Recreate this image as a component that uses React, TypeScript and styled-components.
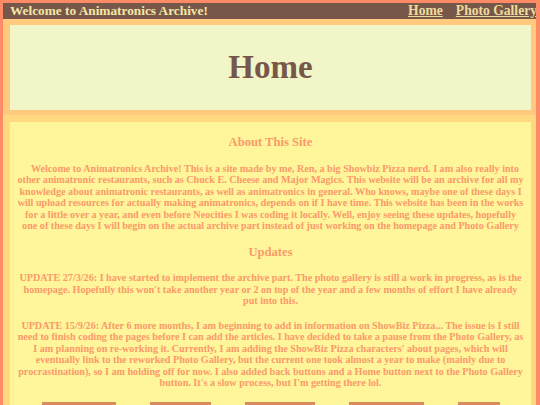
import React from 'react';
import styled, { createGlobalStyle } from 'styled-components';

const colors = {
  coral: '#ff8a66',
  brown: '#77574a',
  cream: '#f4e8a4',
  link: '#efdc9c',
  headerOuter: '#ffc97e',
  headerInner: '#f2f5c7',
  mainOuter: '#ffd87f',
  mainInner: '#fff59b',
  text: '#fb9a6a',
  button: '#d98a5f',
};

const GlobalStyle = createGlobalStyle`
  html, body {
    margin: 0;
    overflow: hidden;
  }
  body {
    background: ${colors.coral};
    font-family: "Liberation Serif", "Times New Roman", serif;
    font-weight: bold;
  }
`;

const buttons = [
  { label: 'Showbiz Pizza', width: 74 },
  { label: 'Chuck E.', width: 61 },
  { label: 'Characters', width: 70 },
  { label: 'Photo Gallery', width: 75 },
  { label: 'Back', width: 42 },
];

const App: React.FC = () => {
  return (
    <>
      <GlobalStyle />
      <Page>
        <TopBar>
          <SiteTitle>Welcome to Animatronics Archive!</SiteTitle>
          <Nav>
            <NavLink href="#">Home</NavLink>
            <NavLink href="#">Photo Gallery</NavLink>
          </Nav>
        </TopBar>
        <Header>
          <HeaderPanel>
            <PageTitle>Home</PageTitle>
          </HeaderPanel>
        </Header>
        <Main>
          <MainPanel>
            <SectionTitle>About This Site</SectionTitle>
            <Paragraph indent>
              Welcome to Animatronics Archive! This is a site made by me, Ren, a
              big Showbiz Pizza nerd. I am also really into other animatronic
              restaurants, such as Chuck E. Cheese and Major Magics. This website
              will be an archive for all my knowledge about animatronic
              restaurants, as well as animatronics in general. Who knows, maybe
              one of these days I will upload resources for actually making
              animatronics, depends on if I have time. This website has been in
              the works for a little over a year, and even before Neocities I was
              coding it locally. Well, enjoy seeing these updates, hopefully one
              of these days I will begin on the actual archive part instead of
              just working on the homepage and Photo Gallery
            </Paragraph>
            <SectionTitle>Updates</SectionTitle>
            <Paragraph>
              UPDATE 27/3/26: I have started to implement the archive part. The
              photo gallery is still a work in progress, as is the homepage.
              Hopefully this won't take another year or 2 on top of the year and
              a few months of effort I have already put into this.
            </Paragraph>
            <Paragraph>
              UPDATE 15/9/26: After 6 more months, I am beginning to add in
              information on ShowBiz Pizza... The issue is I still need to finish
              coding the pages before I can add the articles. I have decided to
              take a pause from the Photo Gallery, as I am planning on re-working
              it. Currently, I am adding the ShowBiz Pizza characters' about
              pages, which will eventually link to the reworked Photo Gallery, but
              the current one took almost a year to make (mainly due to
              procrastination), so I am holding off for now. I also added back
              buttons and a Home button next to the Photo Gallery button. It's a
              slow process, but I'm getting there lol.
            </Paragraph>
            <ButtonRow>
              {buttons.map((b) => (
                <LinkButton key={b.label} w={b.width}>
                  {b.label}
                </LinkButton>
              ))}
            </ButtonRow>
          </MainPanel>
        </Main>
      </Page>
    </>
  );
};

const Page = styled.div`
  padding: 3px 4px 0 3px;
`;

const TopBar = styled.div`
  display: flex;
  justify-content: space-between;
  align-items: center;
  height: 16px;
  padding-left: 7px;
  background: ${colors.brown};
  overflow: hidden;
`;

const SiteTitle = styled.div`
  color: ${colors.cream};
  font-size: 13.3px;
  white-space: nowrap;
`;

const Nav = styled.nav`
  display: flex;
  gap: 13px;
  margin-right: -1px;
  white-space: nowrap;
`;

const NavLink = styled.a`
  color: ${colors.link};
  font-size: 13.6px;
  text-decoration: underline;
`;

const Header = styled.header`
  background: ${colors.headerOuter};
  padding: 6px 5px 5px 7px;
`;

const HeaderPanel = styled.div`
  display: flex;
  align-items: center;
  justify-content: center;
  height: 85px;
  background: ${colors.headerInner};
`;

const PageTitle = styled.h1`
  margin: 0;
  color: ${colors.brown};
  font-size: 33px;
`;

const Main = styled.main`
  background: ${colors.mainOuter};
  padding: 7px 5px 0 7px;
`;

const MainPanel = styled.div`
  display: flex;
  flex-direction: column;
  gap: 13px;
  padding: 13px 6.75px 20px;
  background: ${colors.mainInner};
  color: ${colors.text};
  text-align: center;
`;

const SectionTitle = styled.h2`
  margin: 0;
  font-size: 12.6px;
  line-height: 14.5px;
`;

const Paragraph = styled.p<{ indent?: boolean }>`
  margin: 0;
  font-size: 10.15px;
  line-height: 11.5px;
  text-indent: ${({ indent }) => (indent ? '9px' : '0')};
`;

const ButtonRow = styled.div`
  display: flex;
  justify-content: center;
  gap: 34px;
`;

const LinkButton = styled.button<{ w: number }>`
  width: ${({ w }) => w}px;
  height: 24px;
  padding: 0;
  border: none;
  background: ${colors.button};
  color: ${colors.mainInner};
  font: inherit;
  font-size: 11px;
`;

export default App;
